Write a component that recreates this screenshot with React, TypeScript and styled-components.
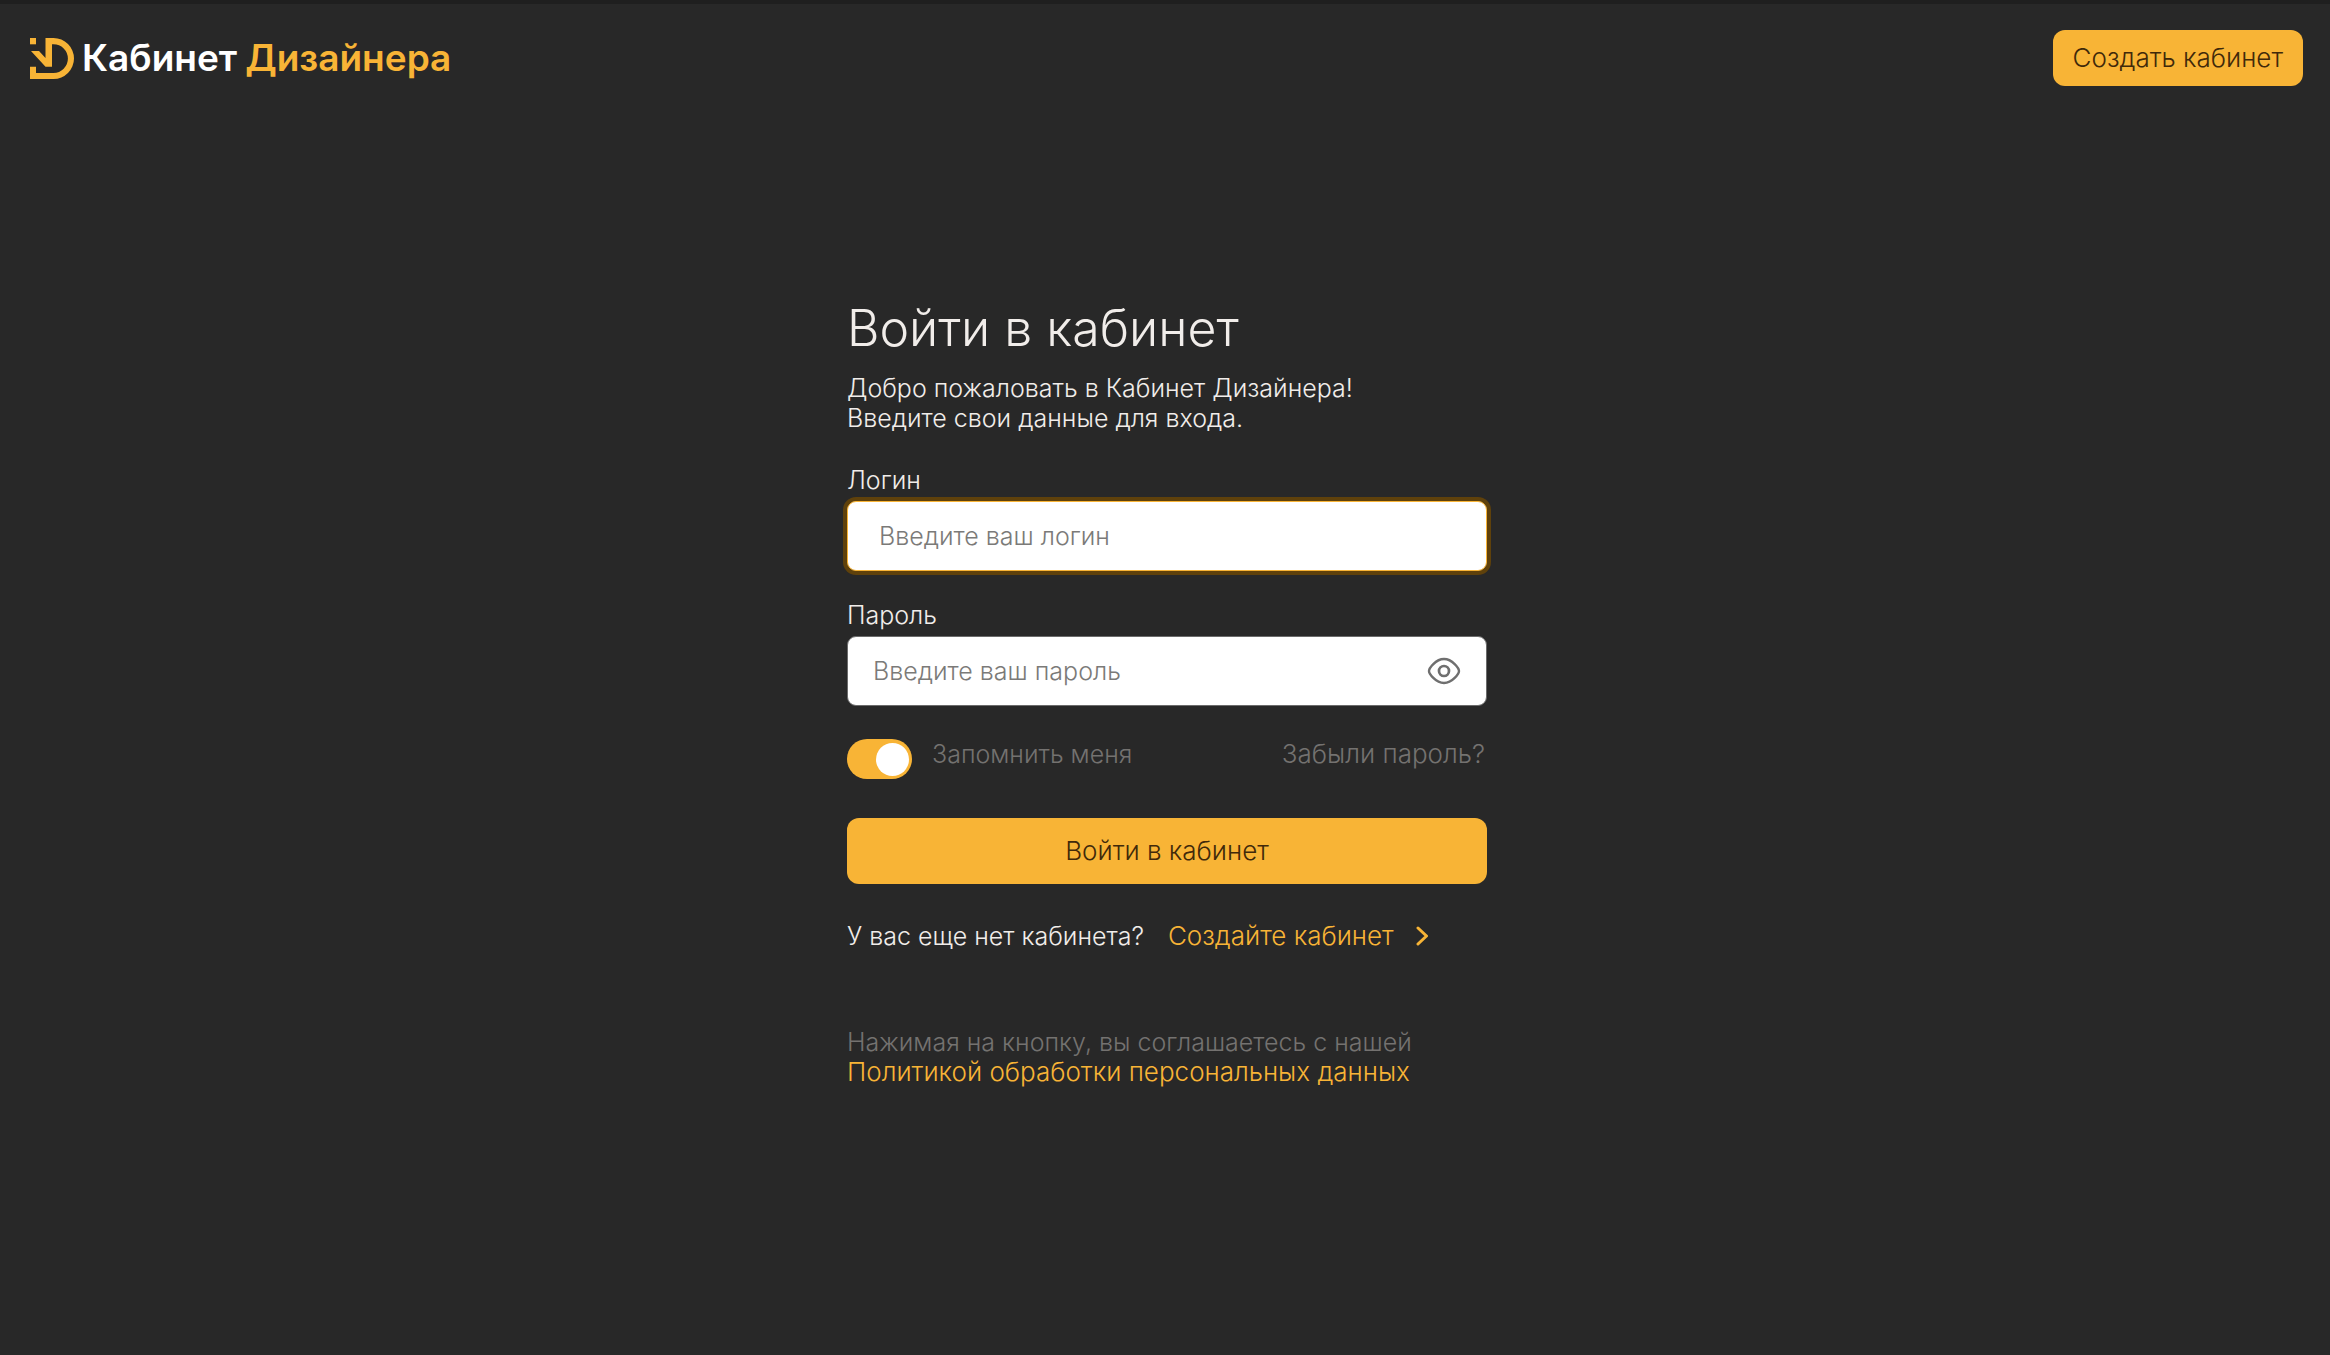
import React, { useState } from "react";
import styled, { createGlobalStyle, css } from "styled-components";

const color = {
  page: "#282828",
  strip: "#1f1f1f",
  accent: "#f8b436",
  ring: "#5f410b",
  text: "#f1edea",
  muted: "#747270",
  placeholder: "#7b7a78",
  ink: "#40290a",
};

const GlobalStyle = createGlobalStyle`
  *, *::before, *::after { box-sizing: border-box; }
  body {
    margin: 0;
    background: ${color.page};
    color: ${color.text};
    font-family: Inter, "Noto Sans", sans-serif;
    font-size: 25px;
    font-weight: 300;
    line-height: 30px;
  }
  button, input { font: inherit; }
`;

const Page = styled.div`
  display: flex;
  flex-direction: column;
  min-height: 100vh;
  border-top: 4px solid ${color.strip};
`;

const Header = styled.header`
  display: flex;
  align-items: center;
  justify-content: space-between;
  padding: 26px 27px 26px 30px;
`;

const Brand = styled.a`
  display: flex;
  align-items: center;
  gap: 8px;
  color: #ffffff;
  font-size: 37px;
  font-weight: 600;
  line-height: 40px;
  text-decoration: none;
`;

const BrandAccent = styled.span`
  color: ${color.accent};
`;

const Button = styled.button<{ $block?: boolean }>`
  height: ${(p) => (p.$block ? 66 : 56)}px;
  width: ${(p) => (p.$block ? "100%" : "auto")};
  padding: 0 20px;
  border: 0;
  border-radius: 12px;
  background: ${color.accent};
  color: ${color.ink};
  font-size: 26px;
  cursor: pointer;
`;

const Main = styled.main`
  display: flex;
  justify-content: center;
  padding: 184px 0 40px 4px;
`;

const Form = styled.form`
  display: flex;
  flex-direction: column;
  width: 640px;
  max-width: 100%;
`;

const Title = styled.h1`
  margin: 0 0 13px;
  font-size: 50px;
  font-weight: 300;
  line-height: 64px;
`;

const Text = styled.p<{ $muted?: boolean }>`
  margin: 0;
  color: ${(p) => (p.$muted ? color.muted : color.text)};
`;

const Fields = styled.div`
  display: flex;
  flex-direction: column;
  gap: 29px;
  margin: 32px 0 33px;
`;

const Field = styled.div`
  display: flex;
  flex-direction: column;
  gap: 6px;
`;

const InputBox = styled.div`
  display: flex;
  align-items: center;
  height: 70px;
  border: 1px solid #6b6b6b;
  border-radius: 9px;
  background: #ffffff;
  &:focus-within {
    border-color: ${color.accent};
    box-shadow: 0 0 0 4px ${color.ring};
  }
`;

const Input = styled.input<{ $inset?: boolean }>`
  flex: 1;
  min-width: 0;
  height: 100%;
  padding: 0 ${(p) => (p.$inset ? 31 : 25)}px;
  border: 0;
  border-radius: 9px;
  outline: 0;
  background: transparent;
  color: ${color.page};
  caret-color: #e4e4e4;
  &::placeholder {
    color: ${color.placeholder};
    opacity: 1;
  }
`;

const IconButton = styled.button`
  display: flex;
  padding: 0;
  margin-right: 25px;
  border: 0;
  background: none;
  cursor: pointer;
`;

const Options = styled.div`
  display: flex;
  align-items: flex-start;
  justify-content: space-between;
  margin-bottom: 39px;
  padding-right: 2px;
`;

const Remember = styled.label`
  display: flex;
  align-items: flex-start;
  gap: 20px;
  color: ${color.muted};
  cursor: pointer;
`;

const Switch = styled.input`
  appearance: none;
  display: flex;
  align-items: center;
  width: 65px;
  height: 40px;
  margin: 0;
  padding: 0 3px;
  border-radius: 20px;
  background: ${color.muted};
  cursor: pointer;
  &::before {
    content: "";
    width: 33px;
    height: 33px;
    border-radius: 50%;
    background: #ffffff;
  }
  &:checked {
    justify-content: flex-end;
    background: ${color.accent};
  }
`;

const Link = styled.a<{ $muted?: boolean }>`
  color: ${color.accent};
  font-size: 26px;
  text-decoration: none;
  ${(p) =>
    p.$muted &&
    css`
      color: ${color.muted};
    `}
`;

const SignUp = styled.div`
  display: flex;
  align-items: center;
  gap: 24px;
  margin: 37px 0 76px;
`;

const ArrowLink = styled(Link)`
  display: flex;
  align-items: center;
  gap: 22px;
`;

const Logo = () => (
  <svg width="44" height="41" viewBox="0 0 44 41" fill={color.accent} aria-hidden="true">
    <path d="M0 0h6v6.3H0z" />
    <path d="M15.5 0H23.5A20.5 20.5 0 0 1 23.5 41H0V28.7H6V35H23.5A14.4 14.4 0 0 0 23.5 6.2H22V28.7H15.5L1 13H9L15.5 20Z" />
  </svg>
);

const Eye = () => (
  <svg width="34" height="28" viewBox="0 0 34 28" fill="none" stroke="#6f6f6f" strokeWidth="2.4" aria-hidden="true">
    <path d="M2 14C2 11.500 8.500 2 17 2S32 11.500 32 14S25.500 26 17 26S2 16.500 2 14Z" />
    <circle cx="17" cy="14" r="5" strokeWidth="2.700" />
  </svg>
);

const Chevron = () => (
  <svg width="13" height="20" viewBox="0 0 13 20" fill="none" stroke={color.accent} strokeWidth="3" strokeLinecap="round" strokeLinejoin="round" aria-hidden="true">
    <path d="M2 2L10.500 10L2 18" />
  </svg>
);

export default function App() {
  const [visible, setVisible] = useState(false);

  return (
    <Page>
      <GlobalStyle />
      <Header>
        <Brand href="#">
          <Logo />
          <span>Кабинет</span>
          <BrandAccent>Дизайнера</BrandAccent>
        </Brand>
        <Button type="button">Создать кабинет</Button>
      </Header>
      <Main>
        <Form onSubmit={(e) => e.preventDefault()}>
          <Title>Войти в кабинет</Title>
          <Text>
            Добро пожаловать в Кабинет Дизайнера!
            <br />
            Введите свои данные для входа.
          </Text>
          <Fields>
            <Field>
              <label htmlFor="login">Логин</label>
              <InputBox>
                <Input id="login" type="text" placeholder="Введите ваш логин" $inset autoFocus />
              </InputBox>
            </Field>
            <Field>
              <label htmlFor="password">Пароль</label>
              <InputBox>
                <Input id="password" type={visible ? "text" : "password"} placeholder="Введите ваш пароль" />
                <IconButton type="button" aria-label="Показать пароль" onClick={() => setVisible(!visible)}>
                  <Eye />
                </IconButton>
              </InputBox>
            </Field>
          </Fields>
          <Options>
            <Remember>
              <Switch type="checkbox" role="switch" defaultChecked />
              Запомнить меня
            </Remember>
            <Link href="#" $muted>
              Забыли пароль?
            </Link>
          </Options>
          <Button type="submit" $block>
            Войти в кабинет
          </Button>
          <SignUp>
            <span>У вас еще нет кабинета?</span>
            <ArrowLink href="#">
              Создайте кабинет
              <Chevron />
            </ArrowLink>
          </SignUp>
          <Text $muted>
            Нажимая на кнопку, вы соглашаетесь с нашей
            <br />
            <Link href="#">Политикой обработки персональных данных</Link>
          </Text>
        </Form>
      </Main>
    </Page>
  );
}
